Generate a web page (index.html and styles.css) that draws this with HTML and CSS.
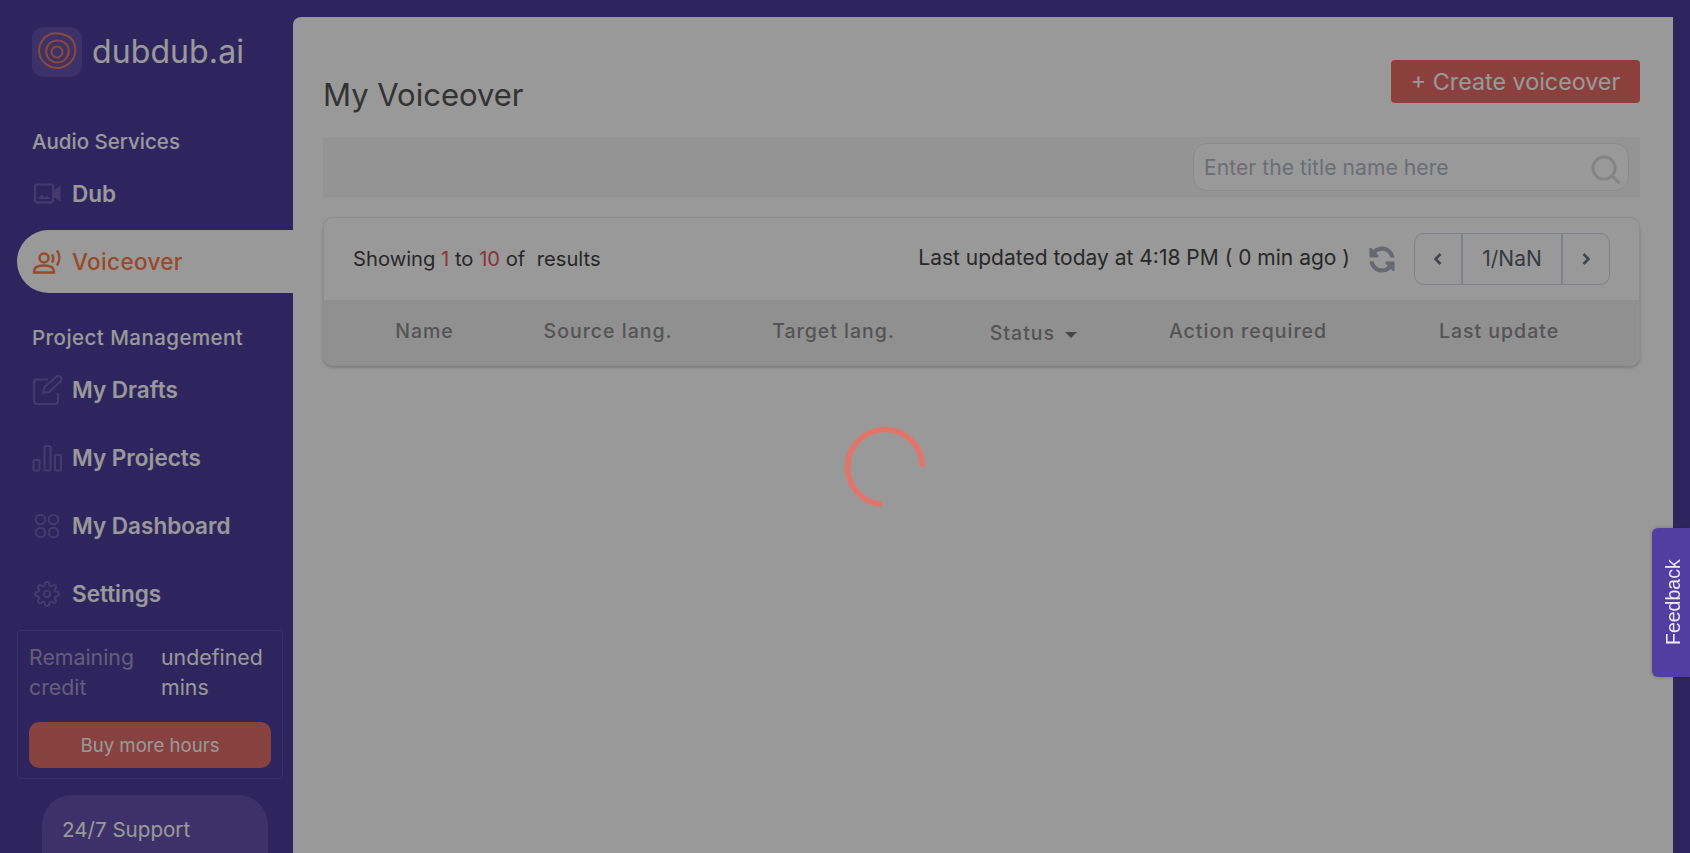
FILE: index.html
```html
<!DOCTYPE html>
<html lang="en">
<head>
<meta charset="utf-8">
<title>My Voiceover - dubdub.ai</title>
<link rel="stylesheet" href="styles.css">
</head>
<body>
<div class="app">
  <aside class="sidebar">
    <div class="brand">
      <span class="brand-mark">
        <svg width="50" height="50" viewBox="0 0 50 50" fill="none" stroke="#ec7a55" stroke-width="2">
          <path d="M25 6.500c4-.6 7 .6 10.500 2.500 4 2.200 6 4.500 7 8.500 1 3.500 1.200 7 .2 10.500-1 4-3.500 7-7 9.500-3.500 2.500-7 4-11 3.500-4.500-.5-8-1.500-11.500-4.500-3.500-3-5.500-6.500-6-11-.5-4 .3-7.500 2.500-11 2.200-3.800 5-6 9-7.500 2-.7 4-1.200 6.800-.5z"/>
          <path d="M25 13.500c3-.4 5.500.7 8 2.500 2.500 2 3.500 4.500 3.700 7.500.2 3-.7 5.500-2.700 8-2 2.500-4.500 3.700-7.500 4-3 .2-6-.5-8.300-2.500-2.500-2-3.700-4.500-4-7.500-.3-3 .5-5.700 2.300-8 2-2.800 5-3.500 8.500-4z"/>
          <circle cx="25" cy="25" r="5.500"/>
        </svg>
      </span>
      <span class="brand-name">dubdub.ai</span>
    </div>

    <div class="section-label section-first">Audio Services</div>
    <nav class="nav">
      <a class="nav-item">
        <svg class="nav-icon" viewBox="0 0 32 32" fill="none" stroke="#7362b8" stroke-width="2">
          <rect x="3" y="6.500" width="18" height="18" rx="2"/>
          <path d="M22 13.500l5.500-4v12.500l-5.500-4z" fill="#7362b8"/>
          <path d="M6 21l4-4.500 3 3 2-2 3.500 3.500z" fill="#7362b8" stroke="none"/>
        </svg>
        <span>Dub</span>
      </a>
      <a class="nav-item nav-item-active">
        <svg class="nav-icon" viewBox="0 0 32 32" fill="none" stroke="#ff7a45" stroke-width="2.500">
          <circle cx="12" cy="12" r="4.500"/>
          <path d="M2 26.500v-1c0-4 4-6 10-6s10 2 10 6v1z"/>
          <path d="M20 8.500c1.600 2.500 1.600 5.500 0 8"/>
          <path d="M25 4.500c3 4.500 3 10.500 0 15"/>
        </svg>
        <span>Voiceover</span>
      </a>
    </nav>

    <div class="section-label section-second">Project Management</div>
    <nav class="nav">
      <a class="nav-item">
        <svg class="nav-icon" viewBox="0 0 32 32" fill="none" stroke="#7362b8" stroke-width="2">
          <path d="M16 5.500H5a3 3 0 0 0-3 3V27a3 3 0 0 0 3 3h18a3 3 0 0 0 3-3v-8"/>
          <path d="M11 19l1.500-6L24 3a3 3 0 0 1 4.500 4.500L17 18z"/>
        </svg>
        <span>My Drafts</span>
      </a>
      <a class="nav-item">
        <svg class="nav-icon" viewBox="0 0 32 32" fill="none" stroke="#7362b8" stroke-width="2">
          <rect x="1.500" y="18" width="6" height="10.500" rx="1"/>
          <rect x="12.500" y="4" width="6" height="24.500" rx="1"/>
          <rect x="23" y="13" width="6" height="15.500" rx="1"/>
        </svg>
        <span>My Projects</span>
      </a>
      <a class="nav-item">
        <svg class="nav-icon" viewBox="0 0 32 32" fill="none" stroke="#7362b8" stroke-width="2">
          <circle cx="8.500" cy="9.500" r="4.800"/>
          <circle cx="21.500" cy="9.500" r="4.800"/>
          <circle cx="8.500" cy="22.500" r="4.800"/>
          <circle cx="21.500" cy="22.500" r="4.800"/>
        </svg>
        <span>My Dashboard</span>
      </a>
      <a class="nav-item">
        <svg class="nav-icon" viewBox="-1.900 -2.800 29.600 29.600" fill="none" stroke="#7362b8" stroke-width="1.850">
          <circle cx="12" cy="12" r="3"/>
          <path d="M19.400 15a1.650 1.650 0 0 0 .33 1.820l.06.06a2 2 0 0 1 0 2.830 2 2 0 0 1-2.830 0l-.06-.06a1.650 1.650 0 0 0-1.820-.33 1.650 1.650 0 0 0-1 1.510V21a2 2 0 0 1-2 2 2 2 0 0 1-2-2v-.09A1.650 1.650 0 0 0 9 19.400a1.650 1.650 0 0 0-1.820.33l-.06.06a2 2 0 0 1-2.830 0 2 2 0 0 1 0-2.830l.06-.06a1.650 1.650 0 0 0 .33-1.820 1.650 1.650 0 0 0-1.510-1H3a2 2 0 0 1-2-2 2 2 0 0 1 2-2h.09A1.650 1.650 0 0 0 4.600 9a1.650 1.650 0 0 0-.33-1.820l-.06-.06a2 2 0 0 1 0-2.830 2 2 0 0 1 2.830 0l.06.06a1.650 1.650 0 0 0 1.820.33H9a1.650 1.650 0 0 0 1-1.510V3a2 2 0 0 1 2-2 2 2 0 0 1 2 2v.09a1.650 1.650 0 0 0 1 1.510 1.650 1.650 0 0 0 1.820-.33l.06-.06a2 2 0 0 1 2.830 0 2 2 0 0 1 0 2.830l-.06.06a1.650 1.650 0 0 0-.33 1.820V9a1.650 1.650 0 0 0 1.510 1H21a2 2 0 0 1 2 2 2 2 0 0 1-2 2h-.09a1.650 1.650 0 0 0-1.510 1z"/>
        </svg>
        <span>Settings</span>
      </a>
    </nav>

    <div class="credit">
      <div class="credit-row">
        <span class="credit-label">Remaining credit</span>
        <span class="credit-value">undefined mins</span>
      </div>
      <button class="buy-btn">Buy more hours</button>
    </div>

    <div class="support">24/7 Support</div>
  </aside>

  <main class="main">
    <header class="page-head">
      <h1 class="page-title">My Voiceover</h1>
      <button class="create-btn">+ Create voiceover</button>
    </header>

    <div class="filter-band">
      <div class="search">
        <input class="search-input" type="text" placeholder="Enter the title name here">
        <svg class="search-icon" width="29" height="29" viewBox="0 0 30 30" fill="none" stroke="#dcdcdc" stroke-width="3">
          <circle cx="13.500" cy="13.500" r="11.500"/>
          <path d="M22 22l6.500 6.500" stroke-linecap="round"/>
        </svg>
      </div>
    </div>

    <section class="card">
      <div class="card-top">
        <div class="showing">Showing <em>1</em> to <em>10</em> of &nbsp;results</div>
        <div class="card-tools">
          <span class="updated">Last updated today at 4:18 PM ( 0 min ago )</span>
          <svg class="refresh" width="26" height="27" viewBox="0 0 512 512" preserveAspectRatio="none">
            <path transform="matrix(-1 0 0 1 512 0)" fill="#aab0bc" d="M370.720 133.280C339.458 104.008 298.888 87.962 255.848 88c-77.458.068-144.328 53.178-162.791 126.850-1.344 5.363-6.122 9.150-11.651 9.150H24.103c-7.498 0-13.194-6.807-11.807-14.176C33.933 94.924 134.813 8 256 8c66.448 0 126.791 26.136 171.315 68.685L463.030 40.970C478.149 25.851 504 36.559 504 57.941V192c0 13.255-10.745 24-24 24H345.941c-21.382 0-32.090-25.851-16.971-40.971l41.750-41.749zM32 296h134.059c21.382 0 32.090 25.851 16.971 40.971l-41.750 41.750c31.262 29.273 71.835 45.319 114.876 45.280 77.418-.070 144.315-53.144 162.787-126.849 1.344-5.363 6.122-9.150 11.651-9.150h57.304c7.498 0 13.194 6.807 11.807 14.176C478.067 417.076 377.187 504 256 504c-66.448 0-126.791-26.136-171.315-68.685L48.970 471.030C33.851 486.149 8 475.441 8 454.059V320c0-13.255 10.745-24 24-24z"/>
          </svg>
          <div class="pager">
            <span class="pager-btn">
              <svg width="12" height="14" viewBox="0 0 12 14" fill="none" stroke="#6f7480" stroke-width="2.600"><path d="M8.500 2L3.500 7l5 5"/></svg>
            </span>
            <span class="pager-page">1/NaN</span>
            <span class="pager-btn">
              <svg width="12" height="14" viewBox="0 0 12 14" fill="none" stroke="#6f7480" stroke-width="2.600"><path d="M3.500 2l5 5-5 5"/></svg>
            </span>
          </div>
        </div>
      </div>
      <div class="thead">
        <span>Name</span>
        <span>Source lang.</span>
        <span>Target lang.</span>
        <span class="th-status">Status <i class="caret"></i></span>
        <span>Action required</span>
        <span>Last update</span>
      </div>
    </section>
  </main>
</div>

<div class="backdrop"></div>
<svg class="spinner" width="82" height="82" viewBox="0 0 82 82" fill="none" stroke="#e2746a" stroke-width="5.500">
  <path d="M78.500 41A37.500 37.500 0 1 0 38 78.400"/>
</svg>
<button class="feedback">Feedback</button>
</body>
</html>
```
FILE: styles.css
```css
* { box-sizing: border-box; }
html, body { margin: 0; height: 100%; overflow: hidden; }
body { font-family: Inter, "Open Sans", "Liberation Sans", sans-serif; color: #222; background: #4e3e9f; }
button { font-family: inherit; border: 0; cursor: pointer; }

.app { display: flex; height: 853px; overflow: hidden; }

/* Sidebar */
.sidebar { width: 293px; flex: none; padding-top: 27px; background: #4e3e9f; color: #fff; overflow: hidden; }
.brand { display: flex; align-items: center; gap: 10px; height: 50px; margin-left: 32px; }
.brand-mark { width: 50px; height: 50px; border-radius: 12px; background: #6453ad; display: block; }
.brand-mark svg { display: block; }
.brand-name { font-size: 32px; letter-spacing: 0.1px; line-height: 50px; }

.section-label { height: 30px; line-height: 30px; margin: 0 0 5px 32px; font-size: 20.500px; font-weight: 500; }
.section-first { margin-top: 50px; }
.section-second { margin-top: 30px; letter-spacing: .45px; }

.nav { display: flex; flex-direction: column; gap: 5px; }
.nav-item { display: flex; align-items: center; height: 63px; margin-left: 17px; padding-left: 15px; border-radius: 32px 0 0 32px; font-size: 22.500px; font-weight: 600; }
.nav-icon { width: 32px; height: 32px; margin-right: 8px; flex: none; }
.nav-item-active { background: #fff; color: #ff7a45; font-weight: 500; letter-spacing: .35px; }

.credit { width: 266px; height: 149px; margin: 5px 0 0 17px; padding: 11px; border: 1px solid #5f50aa; border-radius: 4px; }
.credit-row { display: grid; grid-template-columns: 132px 1fr; font-size: 21.300px; line-height: 30px; height: 60px; }
.credit-label { color: #a69dcb; }
.buy-btn { display: block; width: 100%; height: 46px; margin-top: 20px; border-radius: 10px; background: #e16e69; color: #fff; font-size: 18.600px; }
.support { width: 226px; height: 100px; margin: 16px 0 0 42px; padding: 20px; border-radius: 30px 30px 0 0; background: #6453ad; font-size: 20.600px; line-height: 30px; }

/* Main panel */
.main { flex: 1; margin: 17px 17px 0 0; padding: 43px 33px 0 30px; border-radius: 8px 0 0 0; background: #fff; min-width: 0; }
.page-head { display: flex; justify-content: space-between; align-items: flex-start; height: 55px; margin: 0 0 22px; }
.page-title { margin: 15px 0 0; font-size: 31px; font-weight: 400; line-height: 40px; color: #555; }
.create-btn { width: 249px; height: 43px; border-radius: 4px; background: #e96c68; color: #fff; font-size: 23.300px; }

.filter-band { display: flex; justify-content: flex-end; height: 60px; padding: 6px 11px; background: #f7f7f7; }
.search { position: relative; width: 436px; height: 48px; }
.search-input { display: block; width: 100%; height: 100%; padding: 0 50px 0 10px; border: 1px solid #e9e9e9; border-radius: 14px; background: #fff; font-family: inherit; font-size: 21.200px; color: #333; outline: none; }
.search-input::placeholder { color: #b4b8c2; opacity: 1; }
.search-icon { position: absolute; right: 9px; top: 12px; }

.card { margin: 20px 0 0; border: 1px solid #ececec; border-radius: 10px; box-shadow: 0 2px 3px rgba(0, 0, 0, .18); overflow: hidden; background: #fff; }
.card-top { display: flex; justify-content: space-between; align-items: center; height: 82px; padding: 0 29px 2px 29px; }
.showing { font-size: 20.200px; color: #444; }
.showing em { font-style: normal; color: #e8555a; }
.card-tools { display: flex; align-items: center; gap: 19px; margin-top: 2px; }
.updated { position: relative; top: -2px; font-size: 21px; color: #444; }
.refresh { display: block; }
.pager { display: flex; width: 196px; height: 52px; border: 1px solid #d4d9e3; border-radius: 10px; }
.pager-btn { display: flex; align-items: center; justify-content: center; width: 46px; }
.pager-page { flex: 1; border: solid #d4d9e3; border-width: 0 2px; text-align: center; line-height: 50px; font-size: 21px; color: #5a5f6b; }

.thead { display: grid; grid-template-columns: 201px 166px 285px 115px 314px 188px; height: 65px; padding-bottom: 3px; align-items: center; background: #f0f0f0; text-align: center; font-size: 19.500px; font-weight: 500; letter-spacing: 1px; color: #8d8d8d; }
.th-status { position: relative; top: 2px; }
.caret { display: inline-block; position: relative; top: -3px; margin-left: 4px; vertical-align: -1px; border: 6px solid transparent; border-top: 6px solid #777; border-bottom: 0; }

/* Layers above the page */
.backdrop { position: fixed; inset: 0; background: rgba(0, 0, 0, .4); }
.spinner { position: fixed; left: 844px; top: 426px; }
.feedback { position: fixed; right: 0; top: 528px; width: 38px; height: 149px; padding: 0 4px 0 0; background: #503ea0; color: #ece9f6; font-family: "Liberation Sans", Arial, sans-serif; font-size: 19.500px; writing-mode: vertical-rl; transform: rotate(180deg); border-radius: 0 6px 6px 0; box-shadow: 0 0 4px rgba(0, 0, 0, .25); }
```
